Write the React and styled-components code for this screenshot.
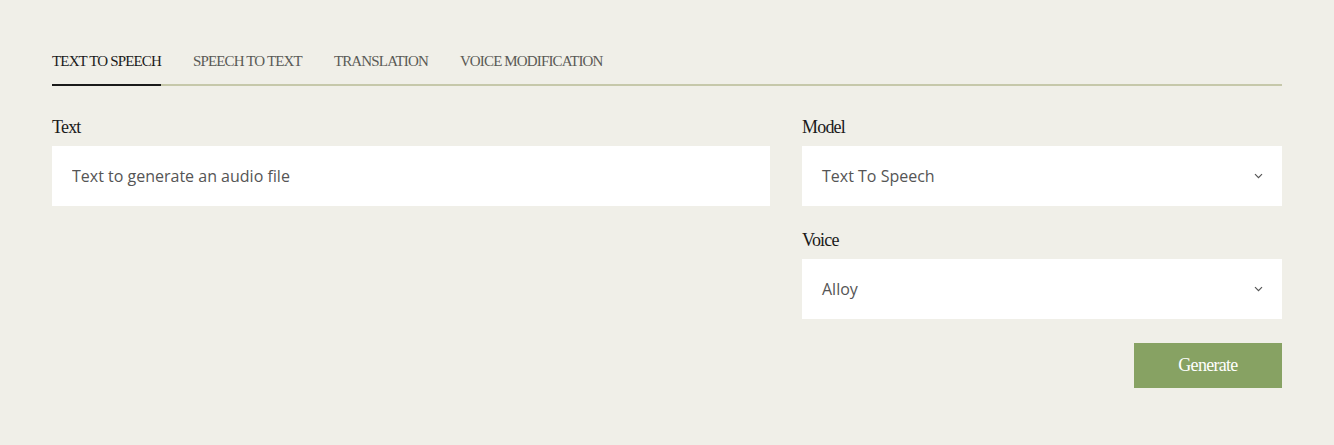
import React, { useState } from "react";
import styled, { createGlobalStyle } from "styled-components";

const GlobalStyle = createGlobalStyle`
  html, body {
    margin: 0;
    padding: 0;
    background: #f0efe8;
  }
  * { box-sizing: border-box; }
`;

const tabs = ["TEXT TO SPEECH", "SPEECH TO TEXT", "TRANSLATION", "VOICE MODIFICATION"];

const Chevron = () => (
  <svg width="9" height="6" viewBox="0 0 9 6" fill="none">
    <path d="M1 1.2l3.5 3.5L8 1.2" stroke="#555" strokeWidth="1.2" />
  </svg>
);

const App = () => {
  const [active, setActive] = useState(0);

  return (
    <Page>
      <GlobalStyle />
      <TabBar>
        {tabs.map((t, i) => (
          <Tab key={t} $active={i === active} onClick={() => setActive(i)}>
            {t}
          </Tab>
        ))}
      </TabBar>

      <Form>
        <Column>
          <Field>
            <Label>Text</Label>
            <Input placeholder="Text to generate an audio file" />
          </Field>
        </Column>
        <Side>
          <Field>
            <Label>Model</Label>
            <SelectBox>
              <span>Text To Speech</span>
              <Chevron />
            </SelectBox>
          </Field>
          <Field>
            <Label>Voice</Label>
            <SelectBox>
              <span>Alloy</span>
              <Chevron />
            </SelectBox>
          </Field>
          <Actions>
            <GenerateButton>Generate</GenerateButton>
          </Actions>
        </Side>
      </Form>
    </Page>
  );
};

export default App;

const Page = styled.main`
  padding: 51px 52px 56px;
  width: 1334px;
  min-height: 445px;
`;

const TabBar = styled.nav`
  display: flex;
  gap: 32px;
  border-bottom: 2px solid #c6c8aa;
`;

const Tab = styled.button`
  background: none;
  border: none;
  padding: 0 0 13px;
  margin-bottom: -2px;
  font-family: "Liberation Serif", "DejaVu Serif", serif;
  font-size: 15px;
  letter-spacing: -0.85px;
  line-height: 20px;
  color: ${(p) => (p.$active ? "#1a1a1a" : "#5a5a55")};
  border-bottom: 2px solid ${(p) => (p.$active ? "#1a1a1a" : "transparent")};
  cursor: pointer;
`;

const Form = styled.section`
  display: grid;
  grid-template-columns: 718px 480px;
  gap: 32px;
  margin-top: 30px;
`;

const Column = styled.div`
  display: flex;
  flex-direction: column;
`;

const Side = styled.div`
  display: flex;
  flex-direction: column;
  gap: 23px;
`;

const Field = styled.label`
  display: flex;
  flex-direction: column;
  gap: 8px;
`;

const Label = styled.span`
  font-family: "Liberation Serif", "DejaVu Serif", serif;
  font-size: 18px;
  letter-spacing: -0.8px;
  line-height: 22px;
  color: #1a1a1a;
`;

const Input = styled.input`
  height: 60px;
  border: none;
  background: #fff;
  padding: 0 20px;
  font-family: "Open Sans", sans-serif;
  font-size: 16px;
  color: #555;
  outline: none;

  &::placeholder {
    color: #555;
  }
`;

const SelectBox = styled.div`
  height: 60px;
  background: #fff;
  padding: 0 19px 0 20px;
  display: flex;
  align-items: center;
  justify-content: space-between;
  font-family: "Open Sans", sans-serif;
  font-size: 16px;
  color: #555;
`;

const Actions = styled.div`
  display: flex;
  justify-content: flex-end;
  margin-top: 1px;
`;

const GenerateButton = styled.button`
  width: 148px;
  height: 45px;
  border: none;
  background: #87a263;
  color: #fff;
  font-family: "Liberation Serif", "DejaVu Serif", serif;
  font-size: 18px;
  letter-spacing: -0.7px;
  cursor: pointer;
`;
